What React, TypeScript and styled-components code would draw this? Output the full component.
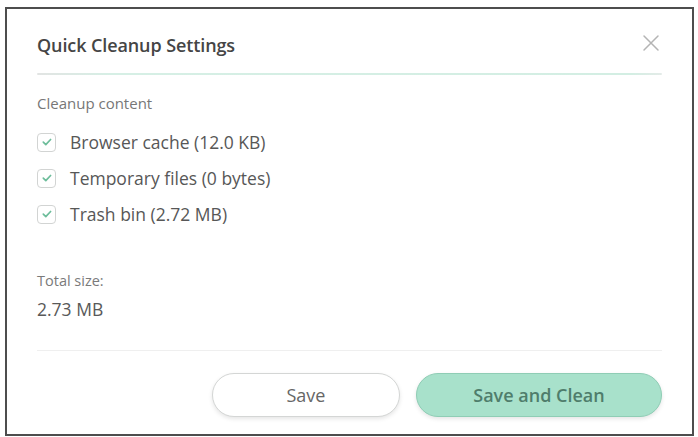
import styled, { createGlobalStyle } from 'styled-components'

const GlobalStyle = createGlobalStyle`
  html, body {
    margin: 0;
    padding: 0;
    background: #ffffff;
  }
  body {
    font-family: "Open Sans", "Noto Sans", "Liberation Sans", sans-serif;
  }
`

const Page = styled.div`
  width: 698px;
  height: 437px;
  box-sizing: border-box;
  padding: 7px 4px 1px 5px;
`

const Dialog = styled.div`
  height: 100%;
  box-sizing: border-box;
  border: 2px solid #4d4d4d;
  background: #ffffff;
  padding: 25px 30px 17px 30px;
  display: flex;
  flex-direction: column;
`

const Header = styled.div`
  display: flex;
  align-items: center;
  justify-content: space-between;
  height: 22px;
`

const Title = styled.h1`
  margin: 0;
  font-size: 18px;
  line-height: 22px;
  font-weight: 600;
  color: #454545;
  letter-spacing: -0.1px;
`

const CloseButton = styled.button`
  border: none;
  background: none;
  padding: 0;
  margin: -4px 2px 0 0;
  width: 18px;
  height: 18px;
  color: #b4b4b4;
  cursor: pointer;
  display: flex;
`

const Progress = styled.div`
  margin-top: 17px;
  height: 3px;
  border-radius: 2px;
  background: linear-gradient(90deg, #e2e4e3 0%, #d6efe5 12%, #d3eee3 95%, #e4ebe8 100%);
`

const SectionLabel = styled.div`
  margin-top: 19px;
  font-size: 15px;
  line-height: 18px;
  color: #777777;
`

const List = styled.div`
  margin-top: 12px;
  display: flex;
  flex-direction: column;
`

const Row = styled.label`
  display: flex;
  align-items: center;
  gap: 14px;
  height: 36px;
  font-size: 17.5px;
  color: #575757;
`

const Box = styled.span`
  flex-shrink: 0;
  width: 19px;
  height: 19px;
  box-sizing: border-box;
  border: 1.5px solid #d2d4d3;
  border-radius: 4px;
  display: flex;
  align-items: center;
  justify-content: center;
  color: #6dbd9b;
`

const Summary = styled.div`
  margin-top: 40px;
  display: flex;
  flex-direction: column;
  gap: 9px;
`

const SummaryLabel = styled.div`
  font-size: 14.5px;
  line-height: 18px;
  color: #7a7a7a;
`

const SummaryValue = styled.div`
  font-size: 17.5px;
  line-height: 20px;
  color: #595959;
`

const Divider = styled.div`
  margin-top: 31px;
  height: 1px;
  background: #efefef;
`

const Footer = styled.div`
  margin-top: 22px;
  display: flex;
  justify-content: flex-end;
  gap: 16px;
`

const Button = styled.button<{ $primary?: boolean; $w: number }>`
  width: ${(p) => p.$w}px;
  height: 44px;
  border-radius: 22px;
  font-family: inherit;
  font-size: 18px;
  cursor: pointer;
  border: 1.5px solid ${(p) => (p.$primary ? '#8fcdb5' : '#d4d6d5')};
  background: ${(p) => (p.$primary ? '#a8e1cb' : '#ffffff')};
  color: ${(p) => (p.$primary ? '#4f7d6b' : '#666666')};
  font-weight: ${(p) => (p.$primary ? 600 : 500)};
  box-shadow: 0 2px 4px rgba(0, 0, 0, 0.1);
`

const Check = () => (
  <svg width="12" height="12" viewBox="0 0 12 12">
    <path
      d="M2.3 6.2l2.5 2.4 4.8-5.1"
      stroke="currentColor"
      strokeWidth="1.7"
      strokeLinecap="round"
      strokeLinejoin="round"
      fill="none"
    />
  </svg>
)

const CloseIcon = () => (
  <svg width="18" height="18" viewBox="0 0 18 18">
    <path d="M2 2l14 14M16 2L2 16" stroke="currentColor" strokeWidth="1.5" strokeLinecap="round" />
  </svg>
)

const items = ['Browser cache (12.0 KB)', 'Temporary files (0 bytes)', 'Trash bin (2.72 MB)']

export default function App() {
  return (
    <>
      <GlobalStyle />
      <Page>
        <Dialog>
          <Header>
            <Title>Quick Cleanup Settings</Title>
            <CloseButton aria-label="Close">
              <CloseIcon />
            </CloseButton>
          </Header>
          <Progress />
          <SectionLabel>Cleanup content</SectionLabel>
          <List>
            {items.map((item) => (
              <Row key={item}>
                <Box>
                  <Check />
                </Box>
                {item}
              </Row>
            ))}
          </List>
          <Summary>
            <SummaryLabel>Total size:</SummaryLabel>
            <SummaryValue>2.73 MB</SummaryValue>
          </Summary>
          <Divider />
          <Footer>
            <Button $w={188}>Save</Button>
            <Button $w={246} $primary>
              Save and Clean
            </Button>
          </Footer>
        </Dialog>
      </Page>
    </>
  )
}
